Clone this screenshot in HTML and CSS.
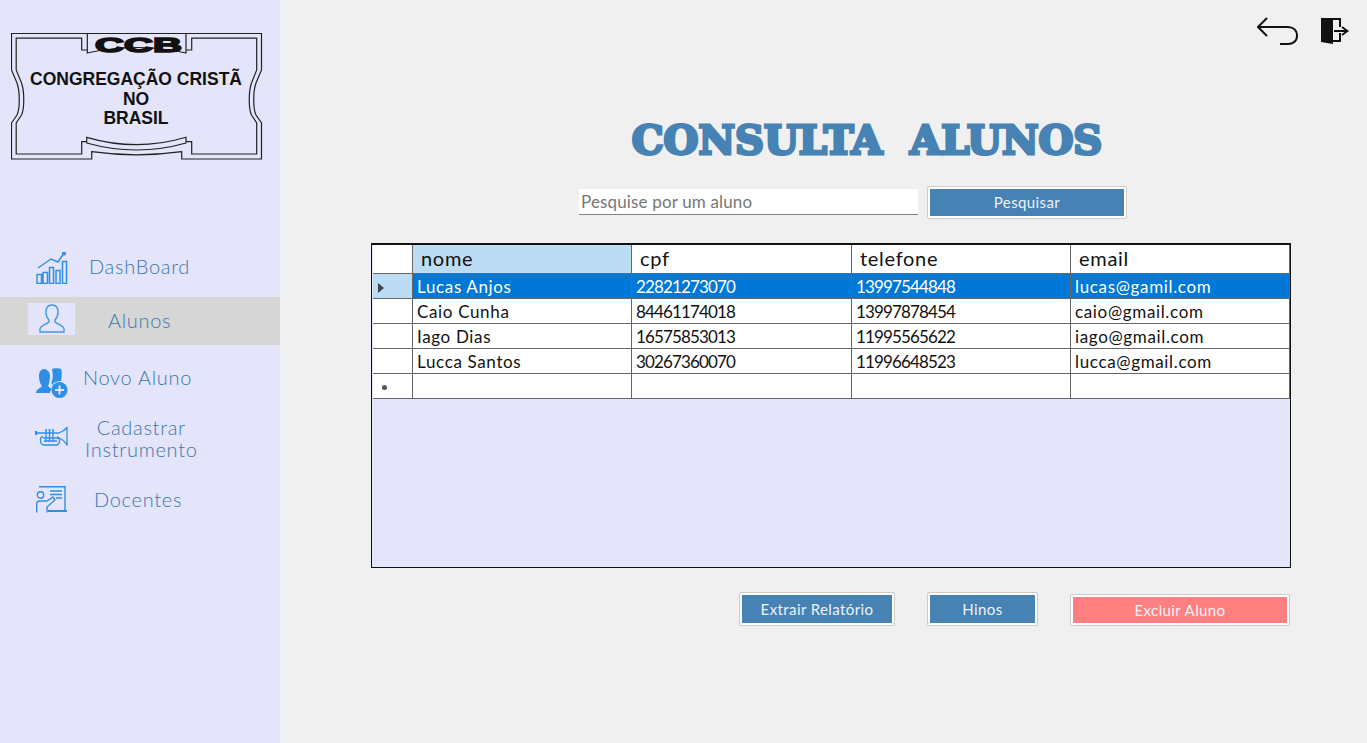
FILE: index.html
```html
<!DOCTYPE html>
<html lang="pt">
<head>
<meta charset="utf-8">
<title>Consulta Alunos</title>
<link rel="stylesheet" href="styles.css">
</head>
<body>
<div class="app">
  <aside class="sidebar">
    <svg class="logo" width="252" height="128" viewBox="0 0 252 128">
      <g fill="none" stroke="#222" stroke-width="1.200">
        <path d="M.5 .5H250.500V37L245 50C242 58 242 76 245 82L250.500 90V126H170.700V118.700Q125.700 125 80.700 118.700V126H.5V90L6 82C9 76 9 58 6 50L.5 37Z"/>
        <path d="M76.300 17H70.700V5.200H5.200V37L10.500 50C13.500 58 13.500 76 10.500 82L5.200 90V121H70.700V108.700H75.700"/>
        <path d="M175 17H180.700V5.200H245.700V37L240.500 50C237.500 58 237.500 76 240.500 82L245.700 90V121H180.700V108.700H175"/>
        <path d="M76.300 1V20Q125.700 9 175 20V1"/>
        <path d="M75.700 104.300Q125.700 119 175 104.300V110Q125.700 124 75.700 110Z"/>
      </g>
      <text class="logo-mark" x="84" y="18.500" textLength="87" lengthAdjust="spacingAndGlyphs">CCB</text>
      <text class="logo-text" x="125" y="52">CONGREGAÇÃO CRISTÃ</text>
      <text class="logo-text" x="125" y="71.500">NO</text>
      <text class="logo-text" x="125" y="91">BRASIL</text>
    </svg>
    <nav class="menu">
      <a class="item item-dash">
        <svg class="icon ic-dash" width="33" height="32" viewBox="0 0 33 32" fill="none" stroke="#2f8fe6" stroke-width="1.500">
          <path d="M2 16L15 7L22 10L28 1"/><circle cx="28" cy="1.500" r="1.300" fill="#2f8fe6"/>
          <path d="M1 22.500h4.500v9H1zM7 20.500h4.500v11H7zM13.500 15.500h4v16h-4zM20 18.500h4v13h-4zM26.500 9.500h4v22h-4z"/>
        </svg>
        <span class="label label-dash">DashBoard</span>
      </a>
      <a class="item item-active">
        <span class="icon-box">
          <svg width="28" height="30" viewBox="0 0 28 30" fill="none" stroke="#3f97e8" stroke-width="1.400">
            <path d="M2 28V25C2 22 9 20 11 18V16C9 14 8 11 8 8C8 3 11 1 14 1S20 3 20 8C20 11 19 14 17 16V18C19 20 26 22 26 25V28Z"/>
          </svg>
        </span>
        <span class="label label-alunos">Alunos</span>
      </a>
      <a class="item item-novo">
        <svg class="icon ic-novo" width="33" height="30" viewBox="0 0 33 30" fill="#2f8fe6">
          <path d="M1 25C1 21 6 20 7 18C5 16 4 12 4 8C4 4 6 1 9 1S15 4 15 8C15 12 14 16 13 18C14 19 15 20 17 21C15 23 15 24 15 25Z"/>
          <path d="M17 1C19 0 24 0 26 1C27 3 27 8 26 13C22 13 19 14 17 17C17 16 16 15 17 13C18 9 18 5 17 1Z"/>
          <circle cx="24.500" cy="22" r="8"/>
          <path d="M24.500 17.500v9M20 22h9" stroke="#e4e4fa" stroke-width="2"/>
        </svg>
        <span class="label label-novo">Novo Aluno</span>
      </a>
      <a class="item item-inst">
        <svg class="icon ic-inst" width="33" height="19" viewBox="0 0 33 19" fill="none" stroke="#2f8fe6" stroke-width="1.300">
          <path d="M1 4V8" stroke-width="2.500"/>
          <path d="M1 6H24C27 5 30 3 32 .5V18C30 15 27 12 24 11H8"/>
          <path d="M8 9.500C4 10 5 18 9 18H21C25 18 26 11 22 10"/>
          <path d="M11 3V15M14.500 3V15M18 3V15M9 14H22M10 3H12M13.500 3H15.500M17 3H19"/>
        </svg>
        <span class="label label-inst">Cadastrar<br>Instrumento</span>
      </a>
      <a class="item item-doc">
        <svg class="icon ic-doc" width="32" height="27" viewBox="0 0 32 27" fill="none" stroke="#2f8fe6" stroke-width="1.400">
          <path d="M3 .7H29V24"/>
          <path d="M14 5H26M14 8.500H26M20 12H26"/>
          <circle cx="4.500" cy="9" r="3.200"/>
          <path d="M.7 26.500V18C.7 16 2 15 4 15H11L17 11L19 14L11 21V26.500"/>
          <path d="M12 25H31" stroke-width="2"/>
        </svg>
        <span class="label label-doc">Docentes</span>
      </a>
    </nav>
  </aside>
  <main class="main">
    <div class="top-icons">
      <svg width="44" height="32" viewBox="0 0 44 32" fill="none" stroke="#111" stroke-width="2">
        <path d="M10 2L1 11L10 20M1 11H31C36 11 40 14 40 20C40 25 36 28 31 28H23"/>
      </svg>
      <svg width="30" height="29" viewBox="0 0 30 29">
        <path d="M1 2H21V11H19V4H13V28L1 26Z" fill="#111"/>
        <path d="M13 24H19V17H21V26H13Z" fill="#111"/>
        <path d="M14 15H27M22 11L27.500 15L22 19" fill="none" stroke="#111" stroke-width="1.800"/>
      </svg>
    </div>
    <h1 class="title">CONSULTA&nbsp;&nbsp;ALUNOS</h1>
    <div class="search">
      <input class="search-input" placeholder="Pesquise por um aluno">
      <button class="btn btn-search">Pesquisar</button>
    </div>
    <div class="grid">
      <div class="row row-head">
        <div class="cell c0"></div>
        <div class="cell c1 head head-on">nome</div>
        <div class="cell c2 head">cpf</div>
        <div class="cell c3 head">telefone</div>
        <div class="cell c4 head">email</div>
      </div>
      <div class="row row-sel">
        <div class="cell c0 mark"><span class="arrow"></span></div>
        <div class="cell c1">Lucas Anjos</div>
        <div class="cell c2 num">22821273070</div>
        <div class="cell c3 num">13997544848</div>
        <div class="cell c4">lucas@gamil.com</div>
      </div>
      <div class="row">
        <div class="cell c0"></div>
        <div class="cell c1">Caio Cunha</div>
        <div class="cell c2 num">84461174018</div>
        <div class="cell c3 num">13997878454</div>
        <div class="cell c4">caio@gmail.com</div>
      </div>
      <div class="row">
        <div class="cell c0"></div>
        <div class="cell c1">Iago Dias</div>
        <div class="cell c2 num">16575853013</div>
        <div class="cell c3 num">11995565622</div>
        <div class="cell c4">iago@gmail.com</div>
      </div>
      <div class="row">
        <div class="cell c0"></div>
        <div class="cell c1">Lucca Santos</div>
        <div class="cell c2 num">30267360070</div>
        <div class="cell c3 num">11996648523</div>
        <div class="cell c4">lucca@gmail.com</div>
      </div>
      <div class="row">
        <div class="cell c0 star"><span class="dot"></span></div>
        <div class="cell c1"></div>
        <div class="cell c2"></div>
        <div class="cell c3"></div>
        <div class="cell c4"></div>
      </div>
    </div>
    <div class="actions">
      <button class="btn btn-report">Extrair Relatório</button>
      <button class="btn btn-hinos">Hinos</button>
      <button class="btn btn-danger">Excluir Aluno</button>
    </div>
  </main>
</div>
</body>
</html>
```

FILE: styles.css
```css
* { box-sizing: border-box; }
html, body { margin: 0; height: 100%; }
body { background: #f0f0f0; font-family: "Lato", "Liberation Sans", sans-serif; overflow: hidden; }
.app { display: flex; width: 1367px; height: 743px; }

.sidebar { width: 280px; flex: none; background: #e4e4fa; padding-top: 33px; }
.logo { display: block; margin-left: 11px; }
.logo-text { font-family: "Liberation Sans", sans-serif; font-weight: 700; font-size: 17.500px; text-anchor: middle; fill: #111; }
.logo-mark { font-family: "Liberation Sans", sans-serif; font-weight: 700; font-size: 20px; fill: #111; stroke: #111; stroke-width: 1.500px; }
.menu { display: flex; flex-direction: column; margin-top: 82px; }
.item { display: flex; align-items: center; }
.icon { flex: none; }
.label { font-size: 20px; font-weight: 300; letter-spacing: 0.700px; line-height: 22px; padding-bottom: 2px; text-align: center; color: #3a78b0; }
.item-dash { height: 54px; padding: 0 0 6px 36px; }
.ic-dash { margin-top: 2px; }
.label-dash { margin-left: 20px; }
.item-active { height: 48px; background: #d6d6d6; padding-left: 28px; }
.icon-box { width: 47px; height: 32px; margin-bottom: 4px; background: #e4e4fa; display: flex; align-items: center; justify-content: center; }
.label-alunos { margin-left: 33px; }
.item-novo { height: 60px; padding: 6px 0 0 35px; }
.ic-novo { margin-top: 9px; }
.label-novo { margin-left: 15px; }
.item-inst { height: 44px; padding-left: 35px; margin-top: 12px; }
.ic-inst { margin-bottom: 6px; }
.label-inst { margin-left: 17px; }
.item-doc { height: 50px; padding-left: 36px; margin-top: 14px; }
.ic-doc { margin-bottom: 2px; }
.label-doc { margin-left: 26px; }

.main { flex: 1; position: relative; display: flex; flex-direction: column; padding: 0 76px 0 91px; }
.top-icons { position: absolute; top: 16px; right: 17px; display: flex; gap: 19px; align-items: flex-start; }
.title { margin: 119px 0 0; height: 42px; line-height: 42px; text-align: center; padding-left: 72px; font-family: "DejaVu Serif", serif; font-weight: 700; font-size: 40px; color: #4682b4; -webkit-text-stroke: 3px #4682b4; white-space: nowrap; }
.search { display: flex; gap: 10px; align-items: center; margin: 23px 0 0 208px; height: 36px; }
.search-input { width: 339px; height: 26px; border: 0; border-bottom: 1px solid #808080; background: #fff; padding: 0 2px; font-family: inherit; font-size: 17px; letter-spacing: 0.150px; outline: 0; }
.search-input::placeholder { color: #777; opacity: 1; }

.btn { font-family: inherit; color: #eef2fa; border: 2px solid #fff; outline: 1px solid #ccc; background: #4682b4; font-size: 15px; letter-spacing: 0.400px; padding: 0; border-radius: 1px; }
.btn-search { width: 198px; height: 31px; }

.grid { width: 920px; height: 325px; margin-top: 23px; border: 1px solid #111; border-top-width: 2px; background: #e4e4fa; padding-left: 1px; }
.row { display: flex; height: 25px; }
.row-head { height: 29px; }
.cell { flex: none; border-right: 1px solid #666; border-bottom: 1px solid #666; background: #fff; font-size: 17px; letter-spacing: 0.650px; color: #111; line-height: 26px; padding-left: 4px; white-space: nowrap; overflow: hidden; }
.num { letter-spacing: -0.850px; }
.c0 { width: 40px; display: flex; align-items: center; padding-left: 5px; }
.c1 { width: 219px; }
.c2 { width: 220px; }
.c3 { width: 219px; }
.c4 { width: 219px; }
.head { font-size: 20px; letter-spacing: 0.700px; line-height: 26px; padding-left: 8px; }
.head-on { background: #bcdcf4; }
.row-sel .cell { background: #0078d7; color: #fff; }
.row-sel .mark { background: #bcdcf4; }
.arrow { width: 0; height: 0; margin-top: 3px; border-left: 6px solid #444; border-top: 5px solid transparent; border-bottom: 5px solid transparent; }
.dot { width: 5px; height: 5px; margin: 3px 0 0 4px; border-radius: 50%; background: #555; }

.actions { display: flex; gap: 34px; justify-content: flex-end; align-items: flex-end; margin-top: 24px; width: 918px; height: 33px; }
.btn-report { width: 154px; height: 32px; }
.btn-hinos { width: 109px; height: 32px; }
.btn-danger { width: 218px; height: 30px; background: #ff8080; }
```
